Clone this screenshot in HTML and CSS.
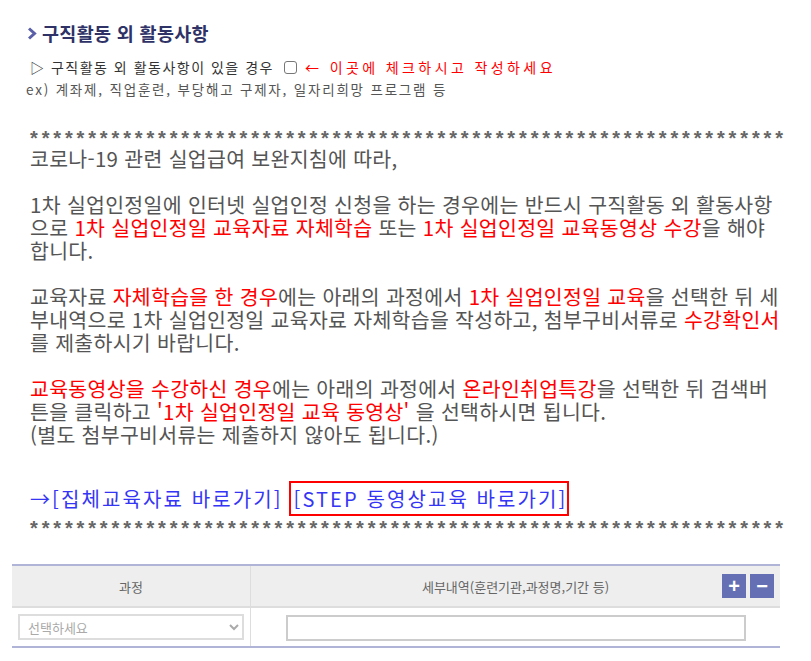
FILE: index.html
```html
<!DOCTYPE html>
<html lang="ko">
<head>
    <meta charset="UTF-8">
    <meta name="viewport" content="width=device-width, initial-scale=1.0">
    <title>구직활동 외 활동사항</title>
    <link rel="stylesheet" href="styles.css">
</head>
<body>
    <section class="etc-section">
        <h3 class="etc-title">
            <svg class="etc-title-icon" width="9" height="13" viewBox="0 0 9 13"><path d="M1 1.5 L6.5 6.5 L1 11.5" fill="none" stroke="#5a5fa8" stroke-width="3"/></svg>
            구직활동 외 활동사항
        </h3>
        <p class="etc-check">
            ▷ 구직활동 외 활동사항이 있을 경우
            <input type="checkbox" class="etc-checkbox" id="etcYn">
            <span class="etc-red">← 이곳에 체크하시고 작성하세요</span>
        </p>
        <p class="etc-example">ex) 계좌제, 직업훈련, 부당해고 구제자, 일자리희망 프로그램 등</p>

        <div class="guide">
            <div class="guide-stars">*****************************************************************</div>
            <p class="guide-text">코로나-19 관련 실업급여 보완지침에 따라,</p>
            <p class="guide-text">1차 실업인정일에 인터넷 실업인정 신청을 하는 경우에는 반드시 구직활동 외 활동사항으로 <span class="guide-red">1차 실업인정일 교육자료 자체학습</span> 또는 <span class="guide-red">1차 실업인정일 교육동영상 수강</span>을 해야 합니다.</p>
            <p class="guide-text">교육자료 <span class="guide-red">자체학습을 한 경우</span>에는 아래의 과정에서 <span class="guide-red">1차 실업인정일 교육</span>을 선택한 뒤 세부내역으로 1차 실업인정일 교육자료 자체학습을 작성하고, 첨부구비서류로 <span class="guide-red">수강확인서</span>를 제출하시기 바랍니다.</p>
            <p class="guide-text"><span class="guide-red">교육동영상을 수강하신 경우</span>에는 아래의 과정에서 <span class="guide-red">온라인취업특강</span>을 선택한 뒤 검색버튼을 클릭하고 <span class="guide-red">'1차 실업인정일 교육 동영상'</span> 을 선택하시면 됩니다.<br>(별도 첨부구비서류는 제출하지 않아도 됩니다.)</p>
            <div class="guide-links">
                <a href="#" class="guide-link">→[집체교육자료 바로가기]</a>
                <a href="#" class="guide-link guide-link-box">[STEP 동영상교육 바로가기]</a>
            </div>
            <div class="guide-stars">*****************************************************************</div>
        </div>

        <table class="etc-table">
            <colgroup>
                <col style="width:238px">
                <col>
            </colgroup>
            <thead>
                <tr>
                    <th>과정</th>
                    <th class="etc-th-detail">
                        세부내역(훈련기관,과정명,기간 등)
                        <span class="etc-btns">
                            <button type="button" class="etc-btn">+</button>
                            <button type="button" class="etc-btn">−</button>
                        </span>
                    </th>
                </tr>
            </thead>
            <tbody>
                <tr>
                    <td>
                        <select class="etc-select">
                            <option value="">선택하세요</option>
                            <option value="1">1차 실업인정일 교육</option>
                            <option value="2">온라인취업특강</option>
                        </select>
                    </td>
                    <td class="etc-td-detail"><input type="text" class="etc-input"></td>
                </tr>
            </tbody>
        </table>
    </section>
</body>
</html>
```

FILE: styles.css
```css
body {
    margin: 0;
    padding: 0;
    background: #fff;
    font-family: "Noto Sans CJK KR", "Noto Sans", sans-serif;
    color: #333;
}
p {
    margin: 0;
}
.etc-title {
    display: flex;
    align-items: center;
    gap: 5px;
    margin: 22px 0 0 28px;
    font-size: 18.5px;
    line-height: 22px;
    font-weight: 700;
    color: #2e3266;
    letter-spacing: 0.3px;
}
.etc-check {
    display: flex;
    align-items: center;
    margin: 13px 0 0 30px;
    font-size: 14px;
    line-height: 20px;
    letter-spacing: 1.5px;
    color: #333;
}
.etc-checkbox {
    width: 13px;
    height: 13px;
    margin: 0 8px 0 10px;
    appearance: none;
    border: 1px solid #777;
    border-radius: 3px;
    background: #fff;
}
.etc-red {
    color: #ff0000;
    letter-spacing: 3.4px;
}
.etc-example {
    margin: 3px 0 0 26px;
    font-size: 13.5px;
    line-height: 18px;
    letter-spacing: 1.8px;
    color: #555;
}
.guide {
    margin: 28px 0 0 30px;
    width: 752px;
    color: #555;
}
.guide-stars {
    font-family: "Liberation Sans", Arial, sans-serif;
    font-weight: 700;
    font-size: 20px;
    line-height: 16px;
    height: 16px;
    letter-spacing: 3.86px;
    color: #666;
    white-space: nowrap;
    padding-top: 4px;
    box-sizing: border-box;
}
.guide-text {
    font-size: 20.5px;
    line-height: 23px;
    letter-spacing: 0.3px;
    margin-top: 23px;
}
.guide-stars + .guide-text {
    margin-top: 5px;
}
.guide-red {
    color: #ff0000;
}
.guide-links {
    display: flex;
    align-items: center;
    gap: 6px;
    margin-top: 35px;
    height: 35px;
}
.guide-link {
    font-size: 20px;
    color: #3535f5;
    text-decoration: none;
    letter-spacing: 2.1px;
}
.guide-link-box {
    border: 2px solid #ff0000;
    padding: 0 0 0 3px;
    height: 35px;
    box-sizing: border-box;
    display: flex;
    align-items: center;
}
.etc-table {
    margin: 32px 0 0 12px;
    width: 768px;
    border-collapse: collapse;
    border-top: 2px solid #b0b5d8;
    border-bottom: 2px solid #b0b5d8;
}
.etc-table th {
    height: 40px;
    background: #eee;
    font-size: 13px;
    font-weight: 400;
    color: #666;
    border-bottom: 2px solid #ddd;
    border-right: 1px solid #ddd;
    padding: 0;
}
.etc-table th:last-child {
    border-right: none;
}
.etc-th-detail {
    position: relative;
}
.etc-btns {
    position: absolute;
    right: 6px;
    top: 8px;
    display: flex;
    gap: 4px;
}
.etc-btn {
    width: 24px;
    height: 24px;
    padding: 0;
    border: none;
    background: #6470b3;
    color: #fff;
    font-family: "Liberation Sans", Arial, sans-serif;
    font-size: 20px;
    font-weight: 700;
    line-height: 24px;
}
.etc-table td {
    height: 38px;
    padding: 0 6px;
    border-right: 1px solid #ddd;
}
.etc-table td:last-child {
    border-right: none;
}
.etc-select {
    width: 226px;
    height: 26px;
    border: 2px solid #ddd;
    background: #fff;
    font-family: inherit;
    font-size: 13px;
    color: #aaa;
    padding: 0 4px;
}
.etc-td-detail {
    padding-left: 35px !important;
}
.etc-input {
    width: 460px;
    height: 26px;
    box-sizing: border-box;
    border: 2px solid #ccc;
}
```
